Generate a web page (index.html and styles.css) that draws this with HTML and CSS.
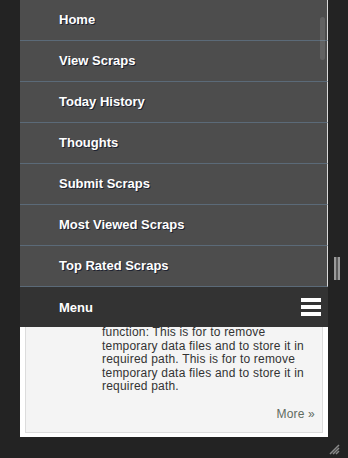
FILE: index.html
```html
<!DOCTYPE html>
<html lang="en">
<head>
  <meta charset="UTF-8">
  <meta name="viewport" content="width=device-width, initial-scale=1.0">
  <title>Scraps</title>
  <link rel="stylesheet" href="styles.css">
</head>
<body>
  <div class="page">
    <!-- Slide-up navigation -->
    <div class="panel">
      <ul class="nav-list">
        <li class="nav-item">Home</li>
        <li class="nav-item">View Scraps</li>
        <li class="nav-item">Today History</li>
        <li class="nav-item">Thoughts</li>
        <li class="nav-item">Submit Scraps</li>
        <li class="nav-item">Most Viewed Scraps</li>
        <li class="nav-item">Top Rated Scraps</li>
      </ul>
      <div class="menu-bar">
        <span>Menu</span>
        <div class="burger">
          <span></span>
          <span></span>
          <span></span>
        </div>
      </div>

      <!-- Content behind the menu -->
      <div class="content">
        <div class="scrap-card">
          <p class="scrap-text">function: This is for to remove temporary data files and to store it in required path. This is for to remove temporary data files and to store it in required path.</p>
          <a class="more-link" href="#">More &raquo;</a>
        </div>
        <div class="next-row">
          <span class="ghost w1"></span>
          <span class="ghost w2"></span>
          <span class="ghost w3"></span>
        </div>
      </div>
      <div class="scroll-thumb"></div>
    </div>

    <div class="side">
      <div class="page-thumb"></div>
    </div>
  </div>
  <div class="grip">
    <svg width="11" height="11" viewBox="0 0 11 11">
      <path d="M10 1 L1 10 M10 4 L4 10 M10 7 L7 10" stroke="#8a8a8a" stroke-width="1.5"/>
    </svg>
  </div>
</body>
</html>
```

FILE: styles.css
```css
/* General */
body {
  margin: 0;
  height: 458px;
  overflow: hidden;
  background-color: #232323;
  font-family: "Liberation Sans", Arial, sans-serif;
  color: #333;
  position: relative;
}

.page {
  display: flex;
  padding-left: 20px;
}

/* Panel */
.panel {
  position: relative;
  width: 308px;
  background-color: #ffffff;
}

.nav-list {
  list-style: none;
  margin: 0;
  padding: 0;
}

.nav-item {
  height: 40px;
  line-height: 40px;
  padding-left: 39px;
  background-color: #4d4d4d;
  border-bottom: 1px solid #5b6a78;
  border-right: 1px solid #d8d8d8;
  color: #ffffff;
  font-size: 13px;
  font-weight: bold;
  text-shadow: 1px 1px 0 #1e2230;
}

.menu-bar {
  height: 40px;
  display: flex;
  align-items: center;
  justify-content: space-between;
  padding: 0 7px 0 39px;
  background-color: #333333;
  color: #ffffff;
  font-size: 13px;
  font-weight: bold;
}

.burger {
  display: flex;
  flex-direction: column;
  gap: 3px;
}

.burger span {
  display: block;
  width: 20px;
  height: 4px;
  background-color: #ffffff;
}

/* Content */
.content {
  height: 110px;
  overflow: hidden;
  padding: 0 5px 0 5px;
}

.scrap-card {
  height: 105px;
  background-color: #f4f4f4;
  border: 1px solid #dcdcdc;
  border-top: none;
  padding: 0 7px 0 76px;
  overflow: hidden;
}

.scrap-text {
  margin: -1px 0 0 0;
  font-size: 12px;
  line-height: 13.5px;
  letter-spacing: 0.2px;
  color: #333;
}

.more-link {
  display: block;
  text-align: right;
  margin-top: 13px;
  font-size: 12px;
  letter-spacing: 0.2px;
  color: #5f6b60;
  text-decoration: none;
}

.next-row {
  display: flex;
  gap: 3px;
  padding: 4px 0 0 97px;
}

.ghost {
  display: block;
  height: 2px;
  background-color: #c8c8c8;
}

.w1 { width: 42px; }
.w2 { width: 33px; }
.w3 { width: 70px; }

.scroll-thumb {
  position: absolute;
  top: 17px;
  right: 3px;
  width: 5px;
  height: 43px;
  border-radius: 3px;
  background-color: rgba(255, 255, 255, 0.12);
}

/* Window scrollbar + resize grip */
.side {
  flex: 1;
}

.page-thumb {
  margin: 257px 0 0 6px;
  width: 6px;
  height: 23px;
  border-left: 2px solid #9a9a9a;
  border-right: 2px solid #9a9a9a;
  box-sizing: border-box;
  background-color: #5a5a5a;
}

.grip {
  position: absolute;
  right: 8px;
  bottom: 6px;
  width: 11px;
  height: 11px;
}
```
